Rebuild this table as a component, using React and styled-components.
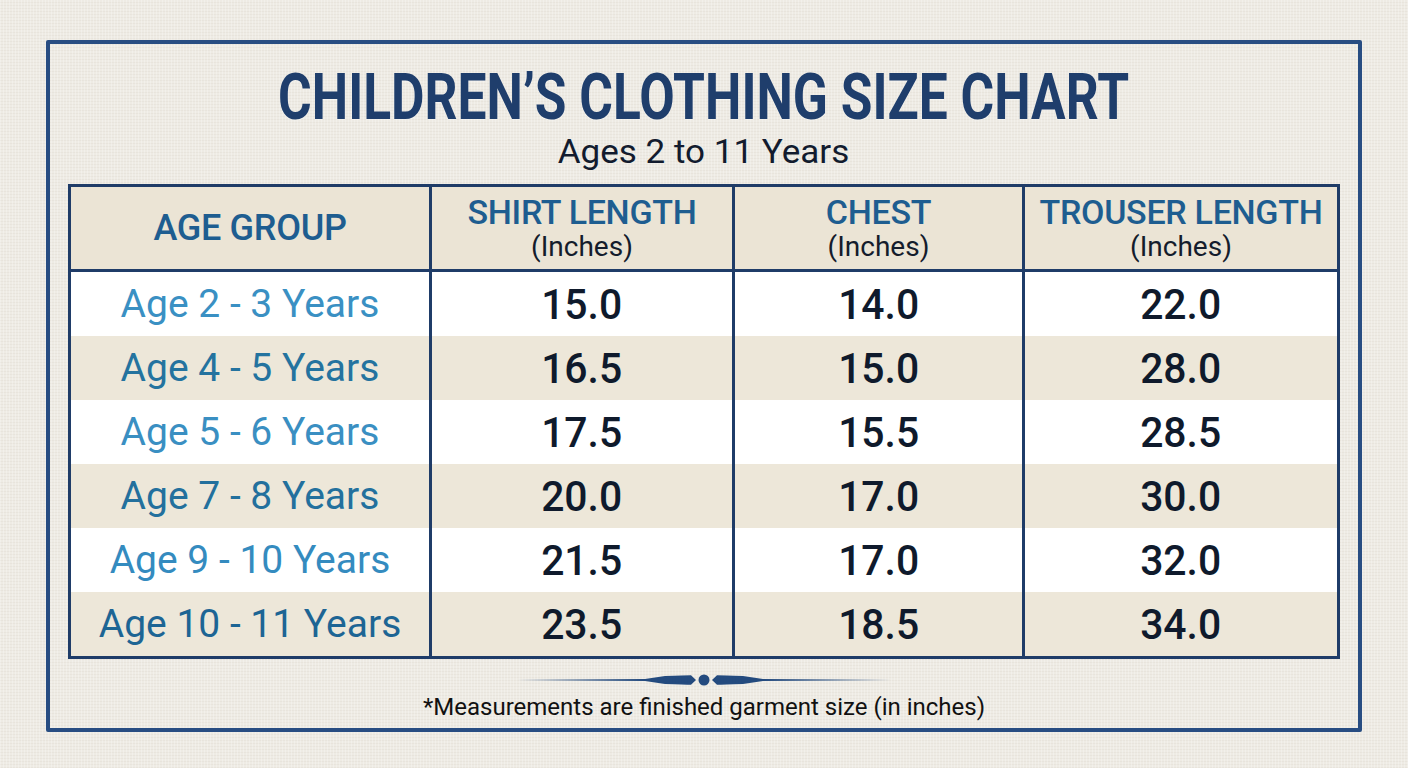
import styled, { createGlobalStyle } from "styled-components";

const GlobalStyle = createGlobalStyle`
  html, body {
    margin: 0;
    padding: 0;
  }
  body {
    width: 1408px;
    height: 768px;
    overflow: hidden;
    font-family: Roboto, "Liberation Sans", sans-serif;
    background-color: #eeebe4;
    background-image:
      repeating-linear-gradient(90deg, rgba(255, 255, 255, 0.25) 0 1px, transparent 1px 3px),
      repeating-linear-gradient(0deg, rgba(190, 180, 165, 0.12) 0 1px, transparent 1px 3px);
  }
`;

const Page = styled.div`
  padding: 40px 0 0 46px;
`;

const Frame = styled.div`
  width: 1316px;
  height: 692px;
  box-sizing: border-box;
  border: 4px solid #284d82;
  border-radius: 2px;
  display: flex;
  flex-direction: column;
  align-items: center;
  padding-top: 19px;
`;

const Title = styled.h1`
  margin: 0;
  font-family: Roboto, "Liberation Sans", sans-serif;
  font-size: 64px;
  line-height: 1.1;
  font-weight: 700;
  color: #1f3e6c;
  white-space: nowrap;
  transform: scaleX(0.805);
  text-shadow: 0 1px 0 rgba(255, 255, 255, 0.4);
`;

const Subtitle = styled.div`
  font-size: 34px;
  line-height: 1.1;
  color: #121b2e;
  transform: scaleX(1.03);
`;

const Table = styled.div`
  margin-top: 13px;
  width: 1272px;
  box-sizing: border-box;
  border: 3px solid #1f3c68;
  display: grid;
  grid-template-columns: 358px 303px 290px 1fr;
`;

const HeadCell = styled.div`
  height: 82px;
  background: #ebe4d5;
  border-bottom: 3px solid #1f3c68;
  border-left: ${(p) => (p.$first ? "none" : "3px solid #1f3c68")};
  display: flex;
  flex-direction: column;
  align-items: center;
  justify-content: center;
`;

const HeadLabel = styled.div`
  font-size: ${(p) => (p.$big ? "36px" : "34px")};
  font-weight: 500;
  line-height: 1.12;
  color: #1e5d90;
  letter-spacing: -0.3px;
  white-space: nowrap;
`;

const HeadUnit = styled.div`
  font-size: 28px;
  line-height: 1.12;
  color: #141c2c;
`;

const Cell = styled.div`
  height: 64px;
  background: ${(p) => (p.$shaded ? "#ede7d9" : "#ffffff")};
  border-left: ${(p) => (p.$first ? "none" : "3px solid #1f3c68")};
  display: flex;
  align-items: center;
  justify-content: center;
`;

const AgeText = styled.span`
  font-size: 39px;
  color: ${(p) => p.$color};
  white-space: nowrap;
`;

const Value = styled.span`
  font-size: 43px;
  font-weight: 500;
  color: #0f1a2c;
  transform: scaleX(0.95);
`;

const Divider = styled.svg`
  margin-top: 13px;
  display: block;
`;

const Note = styled.div`
  margin-top: 5px;
  font-size: 24px;
  line-height: 1.2;
  color: #111111;
`;

const headers = [
  { label: "AGE GROUP" },
  { label: "SHIRT LENGTH", unit: "(Inches)" },
  { label: "CHEST", unit: "(Inches)" },
  { label: "TROUSER LENGTH", unit: "(Inches)" },
];

const rows = [
  { age: "Age 2 - 3 Years", values: ["15.0", "14.0", "22.0"], color: "#3a90c3" },
  { age: "Age 4 - 5 Years", values: ["16.5", "15.0", "28.0"], color: "#24739f" },
  { age: "Age 5 - 6 Years", values: ["17.5", "15.5", "28.5"], color: "#3a8fc2" },
  { age: "Age 7 - 8 Years", values: ["20.0", "17.0", "30.0"], color: "#23709d" },
  { age: "Age 9 - 10 Years", values: ["21.5", "17.0", "32.0"], color: "#348bbf" },
  { age: "Age 10 - 11 Years", values: ["23.5", "18.5", "34.0"], color: "#1d6594" },
];

const App = () => {
  return (
    <Page>
      <GlobalStyle />
      <Frame>
        <Title>CHILDREN’S CLOTHING SIZE CHART</Title>
        <Subtitle>Ages 2 to 11 Years</Subtitle>

        <Table>
          {headers.map((h, i) => (
            <HeadCell key={h.label} $first={i === 0}>
              <HeadLabel $big={!h.unit}>{h.label}</HeadLabel>
              {h.unit && <HeadUnit>{h.unit}</HeadUnit>}
            </HeadCell>
          ))}

          {rows.map((row, r) => [
            <Cell key={row.age} $first $shaded={r % 2 === 1}>
              <AgeText $color={row.color}>{row.age}</AgeText>
            </Cell>,
            ...row.values.map((v, c) => (
              <Cell key={`${r}-${c}`} $shaded={r % 2 === 1}>
                <Value>{v}</Value>
              </Cell>
            )),
          ])}
        </Table>

        <Divider width="374" height="16" viewBox="0 0 374 16">
          <path d="M0 8 L128 6.9 L148 4 Q168 3.2 174 3.2 L179 8 L174 12.8 Q168 12.8 148 12 L128 9.1 Z" fill="#234a7e" />
          <circle cx="187" cy="8" r="5.5" fill="#234a7e" />
          <path d="M374 8 L246 6.9 L226 4 Q206 3.2 200 3.2 L195 8 L200 12.8 Q206 12.8 226 12 L246 9.1 Z" fill="#234a7e" />
        </Divider>

        <Note>*Measurements are finished garment size (in inches)</Note>
      </Frame>
    </Page>
  );
};

export default App;
